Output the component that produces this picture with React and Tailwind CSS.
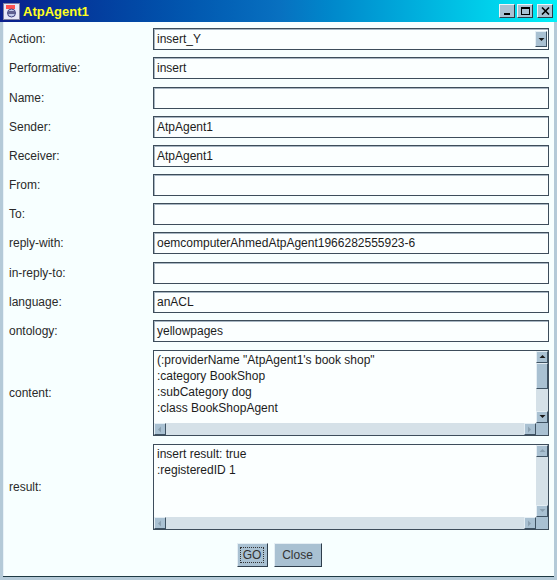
import React from "react";

const font = { fontFamily: '"Liberation Sans", Arial, sans-serif' };

function Arrow({ dir, disabled }) {
  const c = disabled ? "#8aa0b0" : "#1a1a1a";
  const pts = {
    up: "1.5,5 4.5,2 7.5,5",
    down: "1.5,2 4.5,5 7.5,2",
    left: "5,1.5 2,4.5 5,7.5",
    right: "2,1.5 5,4.5 2,7.5",
  }[dir];
  return (
    <div className="w-[12px] h-[12px] flex items-center justify-center bg-[#a9c1d2] border border-t-[#e4eef4] border-l-[#e4eef4] border-b-[#3e5262] border-r-[#3e5262]">
      <svg width="9" height="9" viewBox="0 0 9 9">
        <polygon points={pts} fill={c} />
      </svg>
    </div>
  );
}

function Field({ value }) {
  return (
    <div className="h-[22px] border border-[#3d4d5b] bg-[#fbffff] shadow-[inset_1px_1px_0_#a7b6c2] flex items-center px-[3px] text-[12px] text-[#1c1c1c] whitespace-nowrap">
      {value}
    </div>
  );
}

function Row({ label, children, h = "h-[22px]", extra = "" }) {
  return (
    <div className={`flex items-center ${h} ${extra}`}>
      <div className="w-[144px] text-[12px] text-[#2a2a2a]">{label}</div>
      <div className="flex-1">{children}</div>
    </div>
  );
}

function TextArea({ lines, thumb, disabledV }) {
  return (
    <div className="h-[86px] border border-[#3d4d5b] bg-[#fbffff] flex flex-col">
      <div className="flex flex-1 min-h-0">
        <div className="flex-1 px-[3px] pt-[1px] text-[12px] leading-[16px] text-[#1c1c1c] whitespace-nowrap overflow-hidden">
          {lines.map((l, i) => (
            <div key={i}>{l}</div>
          ))}
        </div>
        <div className="w-[12px] flex flex-col bg-[#d5e1e8]">
          <Arrow dir="up" disabled={disabledV} />
          {thumb ? (
            <div className="h-[26px] bg-[#a9c1d2] border border-t-[#e4eef4] border-l-[#e4eef4] border-b-[#3e5262] border-r-[#3e5262]" />
          ) : null}
          <div className="flex-1" />
          <Arrow dir="down" disabled={disabledV} />
        </div>
      </div>
      <div className="flex h-[12px] bg-[#d5e1e8]">
        <Arrow dir="left" disabled />
        <div className="flex-1" />
        <Arrow dir="right" disabled />
        <div className="w-[12px] bg-[#a9c1d2]" />
      </div>
    </div>
  );
}

export default function App() {
  const rows = [
    ["Performative:", "insert", ""],
    ["Name:", "", "mt-[1px]"],
    ["Sender:", "AtpAgent1", ""],
    ["Receiver:", "AtpAgent1", ""],
    ["From:", "", ""],
    ["To:", "", ""],
    ["reply-with:", "oemcomputerAhmedAtpAgent1966282555923-6", ""],
    ["in-reply-to:", "", "mt-[1px]"],
    ["language:", "anACL", ""],
    ["ontology:", "yellowpages", ""],
  ];
  return (
    <div style={font} className="w-[557px] h-[580px] flex flex-col bg-[#b4cad8] overflow-hidden">
      <div className="h-[22px] flex items-center bg-gradient-to-r from-[#0a1e8c] via-[#0870c0] to-[#00f0f8] pl-[3px] pr-[4px]">
        <svg width="17" height="17" viewBox="0 0 17 17" className="mr-[3px]">
          <rect x="0.5" y="0.5" width="16" height="16" fill="#e8e8f8" stroke="#8080a0" />
          <rect x="3" y="2" width="9" height="4" fill="#ff5050" />
          <circle cx="8.5" cy="10" r="4" fill="#c0c8e8" stroke="#404080" />
          <rect x="5" y="8" width="7" height="3" fill="#606090" />
        </svg>
        <span className="text-[13px] font-bold text-[#ffff20] leading-none">AtpAgent1</span>
        <div className="flex-1" />
        <div className="flex items-center gap-[2px]">
          <div className="w-[16px] h-[14px] bg-[#a9c1d2] border border-t-[#eef4f8] border-l-[#eef4f8] border-b-[#2e3e4c] border-r-[#2e3e4c] flex items-end justify-center pb-[2px]">
            <div className="w-[6px] h-[2px] bg-black" />
          </div>
          <div className="w-[16px] h-[14px] bg-[#a9c1d2] border border-t-[#eef4f8] border-l-[#eef4f8] border-b-[#2e3e4c] border-r-[#2e3e4c] flex items-center justify-center">
            <div className="w-[9px] h-[8px] border border-black border-t-2" />
          </div>
          <div className="w-[16px] h-[14px] ml-[2px] bg-[#a9c1d2] border border-t-[#eef4f8] border-l-[#eef4f8] border-b-[#2e3e4c] border-r-[#2e3e4c] flex items-center justify-center">
            <svg width="9" height="8" viewBox="0 0 9 8">
              <path d="M1 0.5 L8 7.5 M8 0.5 L1 7.5" stroke="black" strokeWidth="1.6" />
            </svg>
          </div>
        </div>
      </div>
      <div className="flex-1 mx-[3px] mb-[4px] border-l border-[#e8f2f8] bg-[#f7ffff] px-[5px] pt-[6px] flex flex-col gap-[7px] shadow-[0_1px_0_#1e3a44]">
        <Row label="Action:">
          <div className="h-[22px] border border-[#3d4d5b] bg-[#fbffff] shadow-[inset_1px_1px_0_#a7b6c2] flex items-center pl-[3px] pr-[1px] text-[12px] text-[#1c1c1c]">
            <div className="flex-1">insert_Y</div>
            <div className="w-[12px] h-[16px] bg-[#a9c1d2] border border-t-[#e4eef4] border-l-[#e4eef4] border-b-[#3e5262] border-r-[#3e5262] flex items-center justify-center">
              <svg width="7" height="5" viewBox="0 0 7 5">
                <polygon points="0.5,1 6.5,1 3.5,4" fill="#1a1a1a" />
              </svg>
            </div>
          </div>
        </Row>
        {rows.map(([l, v, e]) => (
          <Row key={l} label={l} extra={e}>
            <Field value={v} />
          </Row>
        ))}
        <Row label="content:" h="h-[86px]" extra="mt-[1px]">
          <TextArea
            thumb
            lines={[
              '(:providerName "AtpAgent1\'s book shop"',
              ":category BookShop",
              ":subCategory dog",
              ":class BookShopAgent",
            ]}
          />
        </Row>
        <Row label="result:" h="h-[86px]" extra="mt-[1px]">
          <TextArea disabledV lines={["insert result: true", ":registeredID 1"]} />
        </Row>
        <div className="flex justify-center gap-[6px] mt-[6px]">
          <div className="w-[31px] h-[24px] bg-[#a9c1d2] border border-t-[#e4eef4] border-l-[#e4eef4] border-b-[#2e3e4c] border-r-[#2e3e4c] flex items-center justify-center">
            <div className="px-[2px] border border-dotted border-[#333] text-[12px] text-[#333] leading-[14px]">GO</div>
          </div>
          <div className="w-[48px] h-[24px] bg-[#a9c1d2] border border-t-[#e4eef4] border-l-[#e4eef4] border-b-[#2e3e4c] border-r-[#2e3e4c] flex items-center justify-center text-[12px] text-[#333]">
            Close
          </div>
        </div>
      </div>
    </div>
  );
}
